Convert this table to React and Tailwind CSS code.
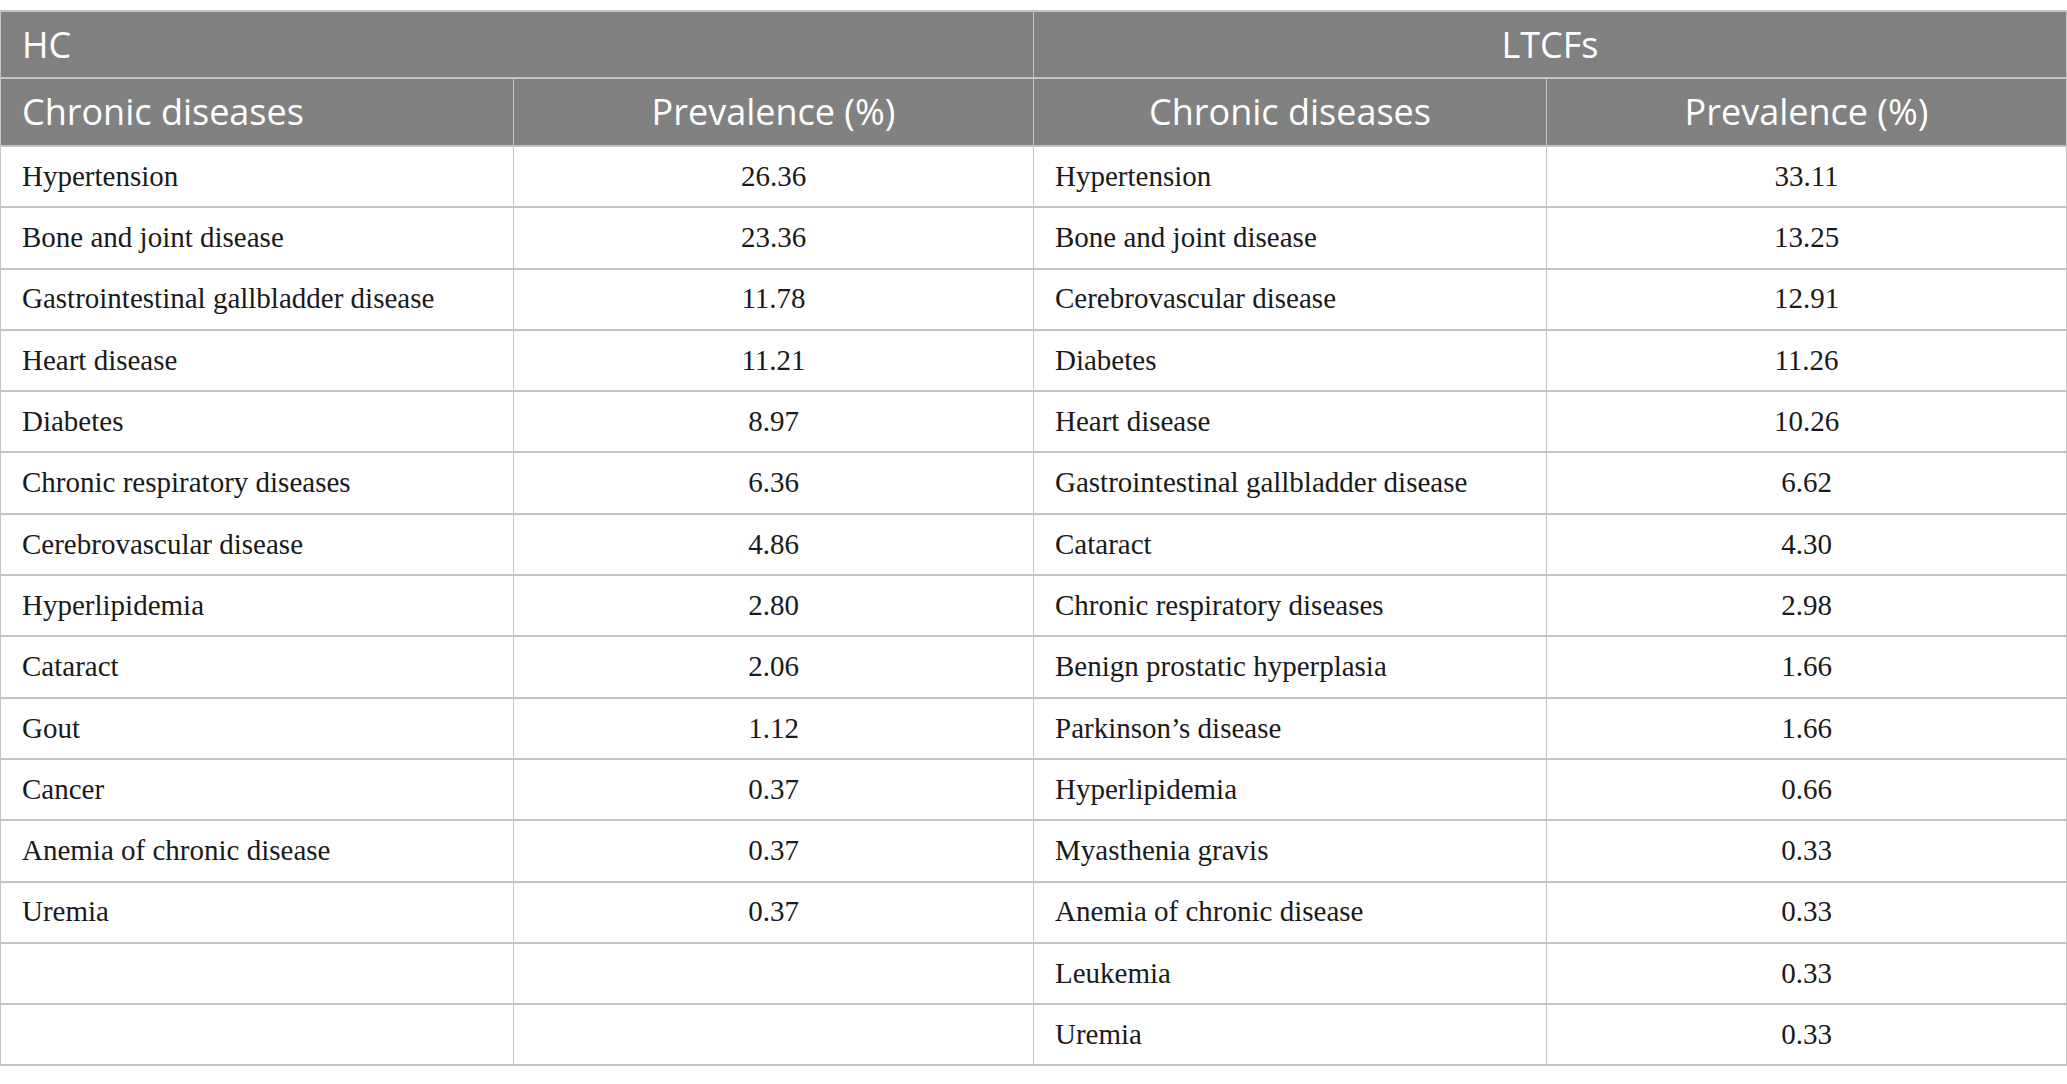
import React from 'react';

const hc = [
  ['Hypertension', '26.36'],
  ['Bone and joint disease', '23.36'],
  ['Gastrointestinal gallbladder disease', '11.78'],
  ['Heart disease', '11.21'],
  ['Diabetes', '8.97'],
  ['Chronic respiratory diseases', '6.36'],
  ['Cerebrovascular disease', '4.86'],
  ['Hyperlipidemia', '2.80'],
  ['Cataract', '2.06'],
  ['Gout', '1.12'],
  ['Cancer', '0.37'],
  ['Anemia of chronic disease', '0.37'],
  ['Uremia', '0.37'],
  ['', ''],
  ['', ''],
];

const ltcf = [
  ['Hypertension', '33.11'],
  ['Bone and joint disease', '13.25'],
  ['Cerebrovascular disease', '12.91'],
  ['Diabetes', '11.26'],
  ['Heart disease', '10.26'],
  ['Gastrointestinal gallbladder disease', '6.62'],
  ['Cataract', '4.30'],
  ['Chronic respiratory diseases', '2.98'],
  ['Benign prostatic hyperplasia', '1.66'],
  ["Parkinson\u2019s disease", '1.66'],
  ['Hyperlipidemia', '0.66'],
  ['Myasthenia gravis', '0.33'],
  ['Anemia of chronic disease', '0.33'],
  ['Leukemia', '0.33'],
  ['Uremia', '0.33'],
];

const head = "font-['Open_Sans','Lato',sans-serif] text-[36px] text-white font-normal";
const body = "font-['Liberation_Serif','Times_New_Roman',serif] text-[29px] text-[#1a1a1a]";

export default function App() {
  return (
    <div className="min-h-screen bg-white pt-[10px]">
      <table className="w-[2066px] table-fixed border-collapse border-t-2 border-l border-[#c4c4c4]">
        <colgroup>
          <col className="w-[513px]" />
          <col className="w-[520px]" />
          <col className="w-[513px]" />
          <col className="w-[520px]" />
        </colgroup>
        <thead className="bg-[#808180]">
          <tr className="h-[67px]">
            <th colSpan={2} className={`${head} text-left pl-[21px] border-r border-b-2 border-[#c4c4c4]`}>HC</th>
            <th colSpan={2} className={`${head} text-center border-r border-b-2 border-[#c4c4c4]`}>LTCFs</th>
          </tr>
          <tr className="h-[68px]">
            <th className={`${head} text-left pl-[21px] border-r border-b-2 border-[#c4c4c4]`}>Chronic diseases</th>
            <th className={`${head} text-center border-r border-b-2 border-[#c4c4c4]`}>Prevalence (%)</th>
            <th className={`${head} text-center border-r border-b-2 border-[#c4c4c4]`}>Chronic diseases</th>
            <th className={`${head} text-center border-r border-b-2 border-[#c4c4c4]`}>Prevalence (%)</th>
          </tr>
        </thead>
        <tbody>
          {hc.map((row, i) => (
            <tr key={i} className="h-[61.3px]">
              <td className={`${body} pl-[21px] border-r border-b-2 border-[#c4c4c4]`}>{row[0]}</td>
              <td className={`${body} text-center border-r border-b-2 border-[#c4c4c4]`}>{row[1]}</td>
              <td className={`${body} pl-[21px] border-r border-b-2 border-[#c4c4c4]`}>{ltcf[i][0]}</td>
              <td className={`${body} text-center border-r border-b-2 border-[#c4c4c4]`}>{ltcf[i][1]}</td>
            </tr>
          ))}
        </tbody>
      </table>
    </div>
  );
}
